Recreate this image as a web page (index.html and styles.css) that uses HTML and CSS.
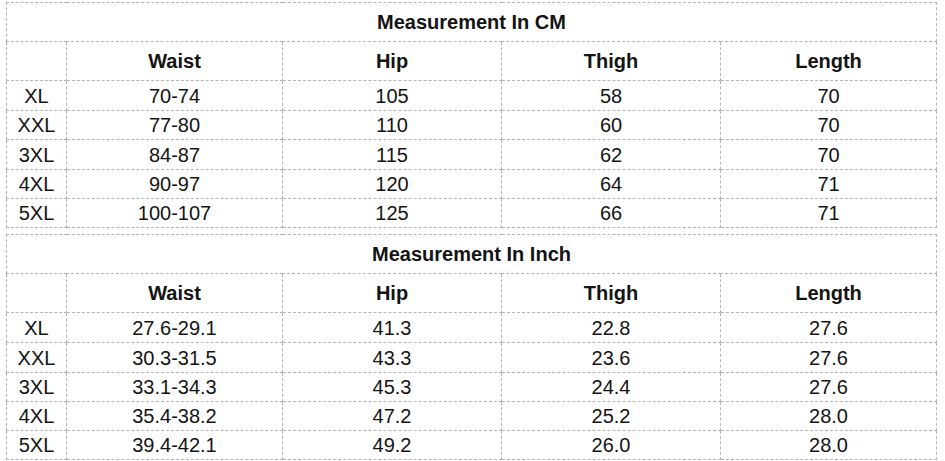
FILE: index.html
```html
<!DOCTYPE html>
<html>
<head>
<meta charset="utf-8">
<link rel="stylesheet" href="styles.css">
</head>
<body>
<div class="page">
<table class="size-table">
  <colgroup><col class="c-size"><col class="c-a"><col class="c-b"><col class="c-b"><col class="c-a"></colgroup>
  <tr class="r-title"><td colspan="5" class="title">Measurement In CM</td></tr>
  <tr class="r-head"><td></td><td class="head">Waist</td><td class="head">Hip</td><td class="head">Thigh</td><td class="head">Length</td></tr>
  <tr class="r-tall"><td>XL</td><td>70-74</td><td>105</td><td>58</td><td>70</td></tr>
  <tr class="r-short"><td>XXL</td><td>77-80</td><td>110</td><td>60</td><td>70</td></tr>
  <tr class="r-tall"><td>3XL</td><td>84-87</td><td>115</td><td>62</td><td>70</td></tr>
  <tr class="r-short"><td>4XL</td><td>90-97</td><td>120</td><td>64</td><td>71</td></tr>
  <tr class="r-short"><td>5XL</td><td>100-107</td><td>125</td><td>66</td><td>71</td></tr>
</table>
<table class="size-table">
  <colgroup><col class="c-size"><col class="c-a"><col class="c-b"><col class="c-b"><col class="c-a"></colgroup>
  <tr class="r-title"><td colspan="5" class="title">Measurement In Inch</td></tr>
  <tr class="r-head"><td></td><td class="head">Waist</td><td class="head">Hip</td><td class="head">Thigh</td><td class="head">Length</td></tr>
  <tr class="r-tall"><td>XL</td><td>27.6-29.1</td><td>41.3</td><td>22.8</td><td>27.6</td></tr>
  <tr class="r-tall"><td>XXL</td><td>30.3-31.5</td><td>43.3</td><td>23.6</td><td>27.6</td></tr>
  <tr class="r-short"><td>3XL</td><td>33.1-34.3</td><td>45.3</td><td>24.4</td><td>27.6</td></tr>
  <tr class="r-short"><td>4XL</td><td>35.4-38.2</td><td>47.2</td><td>25.2</td><td>28.0</td></tr>
  <tr class="r-short"><td>5XL</td><td>39.4-42.1</td><td>49.2</td><td>26.0</td><td>28.0</td></tr>
</table>
</div>
</body>
</html>
```
FILE: styles.css
```css
html, body {
  margin: 0;
  padding: 0;
  background: #ffffff;
}
.page {
  padding: 2px 0 0 6px;
  display: flex;
  flex-direction: column;
  gap: 6px;
}
.size-table {
  border-collapse: collapse;
  table-layout: fixed;
  width: 931px;
  font-family: "Liberation Sans", Arial, sans-serif;
  font-size: 20px;
  color: #141414;
}
.size-table td {
  border: 1px dashed #b4b4b4;
  padding: 0;
  text-align: center;
  vertical-align: middle;
  line-height: 20px;
}
.c-size { width: 60px; }
.c-a { width: 216px; }
.c-b { width: 219px; }
.r-title td, .r-head td { height: 38px; }
.r-tall td { height: 29px; }
.r-short td { height: 28px; }
.title, .head {
  font-weight: bold;
  font-size: 20px;
}
```
